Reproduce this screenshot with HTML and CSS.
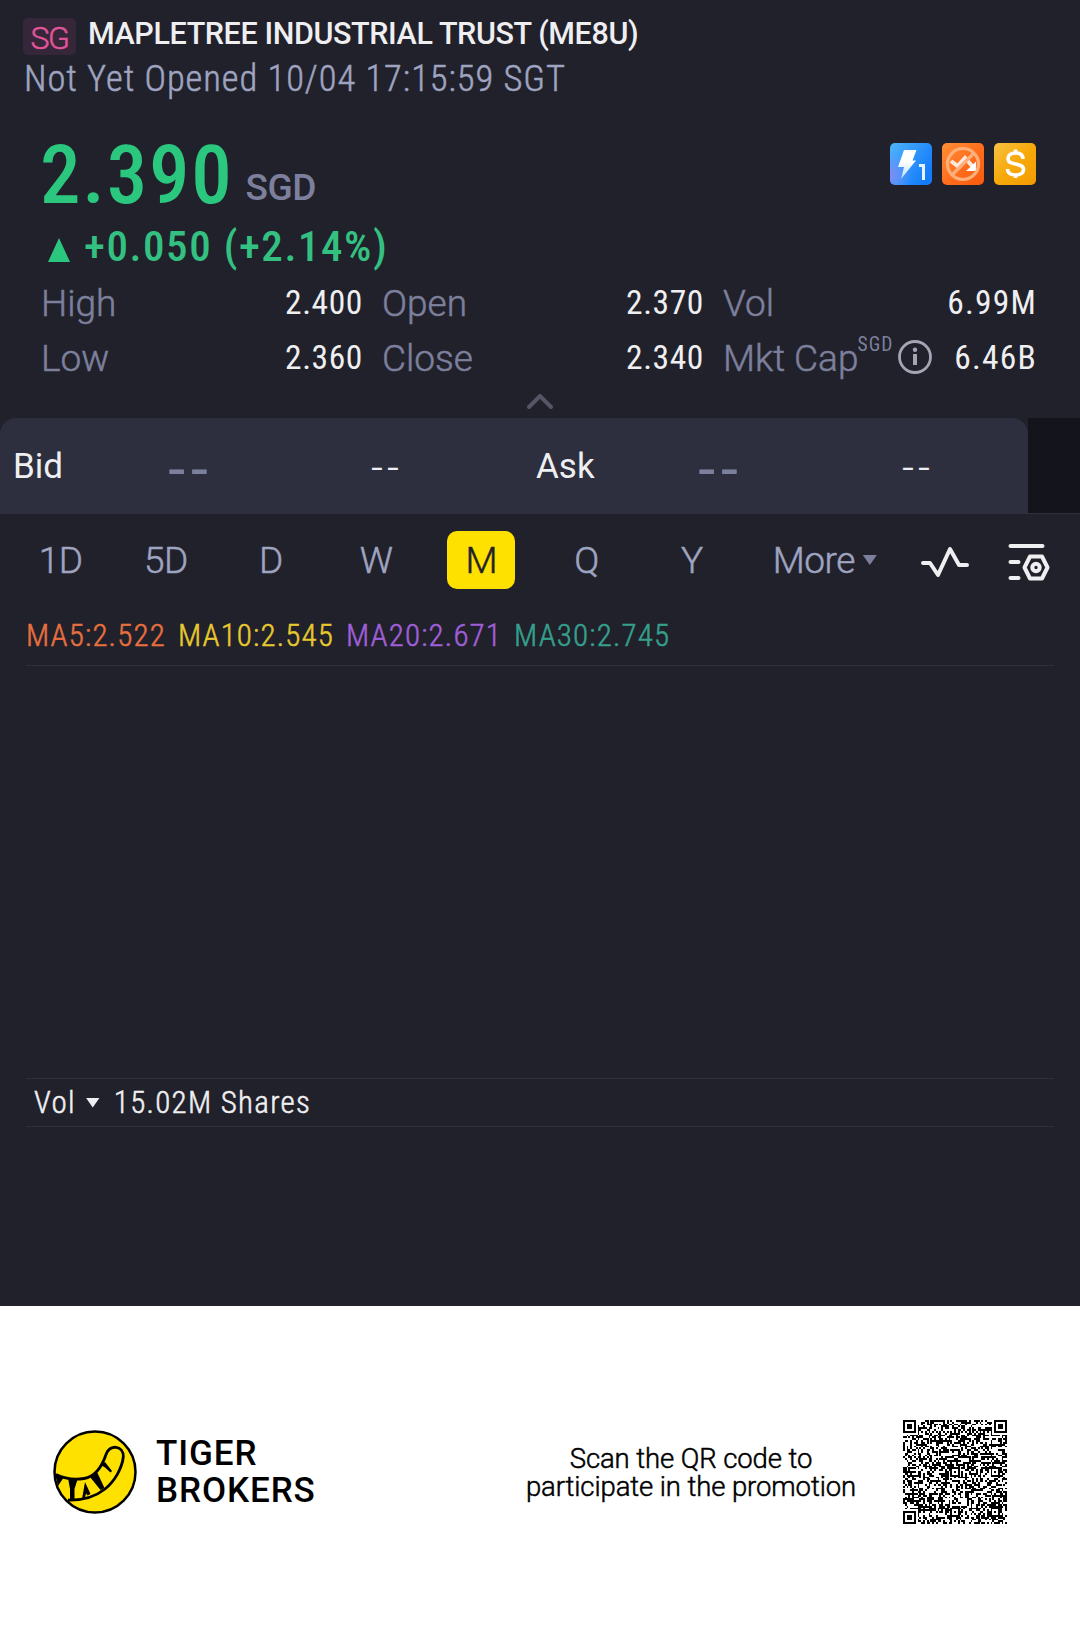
FILE: index.html
```html
<!doctype html>
<html lang="en">
<head>
  <title>MAPLETREE INDUSTRIAL TRUST (ME8U)</title>
  <meta charset="UTF-8">
  <meta name="viewport" content="width=device-width, initial-scale=1">
  <link rel="stylesheet" href="styles.css">
</head>
<body>
  <main>
    <header>
      <div class="title"><span class="market">SG</span><h1>MAPLETREE INDUSTRIAL TRUST (ME8U)</h1></div>
      <p class="status">Not Yet Opened 10/04 17:15:59 SGT</p>
    </header>

    <section class="quote">
      <div class="price">
        <span class="last">2.390</span>
        <span class="currency">SGD</span>
        <div class="tags">
          <svg viewBox="0 0 42 42">
            <defs>
              <linearGradient id="blue" x1="0" y1="0" x2="1" y2=".6">
                <stop offset="0" stop-color="#4fb4fb"/><stop offset="1" stop-color="#147cfa"/>
              </linearGradient>
              <radialGradient id="violet" cx="0" cy=".75" r=".5">
                <stop offset="0" stop-color="#7d8df5"/><stop offset="1" stop-color="#7d8df5" stop-opacity="0"/>
              </radialGradient>
              <linearGradient id="bolt" x1="0" y1="0" x2="0" y2="1">
                <stop offset=".4" stop-color="#fff"/><stop offset="1" stop-color="#b5dcff"/>
              </linearGradient>
            </defs>
            <rect width="42" height="42" rx="5" fill="url(#blue)"/>
            <rect width="42" height="42" rx="5" fill="url(#violet)"/>
            <path d="M14 7h12.500l-4 10.500h3.500L11 36l3-12H8z" fill="url(#bolt)"/>
            <path d="M29 22.500h4.500V37" fill="none" stroke="#e6f3ff" stroke-width="3"/>
          </svg>
          <svg viewBox="0 0 42 42">
            <defs>
              <linearGradient id="orange" x1="0" y1="0" x2="1" y2="1">
                <stop offset="0" stop-color="#ff9035"/><stop offset=".5" stop-color="#ff6f1e"/><stop offset="1" stop-color="#f8590c"/>
              </linearGradient>
            </defs>
            <rect width="42" height="42" rx="5" fill="url(#orange)"/>
            <path d="M9 18l6.500 5 7.500-8 8 9" fill="none" stroke="#ffe9dc" stroke-width="4"/>
            <path d="M34 18.500v9.500H24z" fill="#fff"/>
            <g fill="none" stroke="#ffb07a" stroke-width="3.200"><circle cx="21" cy="21" r="15.500"/><path d="M10 32l22-22"/></g>
          </svg>
          <svg viewBox="0 0 42 42">
            <defs>
              <linearGradient id="gold" x1="0" y1="0" x2="1" y2="1">
                <stop offset="0" stop-color="#f6c143"/><stop offset=".5" stop-color="#f7a90a"/><stop offset="1" stop-color="#f39b00"/>
              </linearGradient>
            </defs>
            <rect width="42" height="42" rx="5" fill="url(#gold)"/>
            <path d="M29 16c0-4-3-6-7.500-6S14 12 14 15.500s2.500 4.500 7.500 5.500 8 2 8 5.500-3.500 5.500-8 5.500-8-2-8-6M21.500 6.500v4M21.500 31.500v3.500" fill="none" stroke="#fff" stroke-width="3.600"/>
          </svg>
        </div>
      </div>
      <p class="change"><i class="up"></i>+0.050 (+2.14%)</p>
      <dl class="stats">
        <div><dt>High</dt><dd>2.400</dd></div>
        <div><dt>Open</dt><dd>2.370</dd></div>
        <div><dt>Vol</dt><dd class="wide">6.99M</dd></div>
        <div><dt>Low</dt><dd>2.360</dd></div>
        <div><dt>Close</dt><dd>2.340</dd></div>
        <div>
          <dt>Mkt Cap</dt><small>SGD</small>
          <svg class="info" viewBox="0 0 34 34"><circle cx="17" cy="17" r="15.500"/><circle class="dot" cx="17" cy="9.700" r="2.200"/><path d="M17 14v11"/></svg>
          <dd class="wide">6.46B</dd>
        </div>
      </dl>
      <svg class="collapse" viewBox="0 0 26 15"><path d="M2 13L13 2l11 11"/></svg>
    </section>

    <section class="book">
      <div class="sides">
        <div class="bid"><span>Bid</span><b>--</b><em>--</em></div>
        <div class="ask"><span>Ask</span><b>--</b><em>--</em></div>
      </div>
      <div class="rest"></div>
    </section>

    <nav>
      <a>1D</a><a>5D</a><a>D</a><a>W</a><a class="on">M</a><a>Q</a><a>Y</a>
      <span class="more">More</span><i class="down"></i>
      <svg class="pulse" viewBox="0 0 48 32"><path d="M2 17h7l8 12L29 3l9 16h8"/></svg>
      <svg class="settings" viewBox="0 0 42 40"><path d="M2.500 4h32M2.500 20h8M2.500 36h8"/><path d="M22 14.500h12l5.500 11-5.500 11H22l-5.500-11z"/><circle cx="28" cy="25.500" r="3.700"/></svg>
    </nav>

    <section class="chart">
      <div class="averages">
        <span class="ma5">MA5:2.522</span>
        <span class="ma10">MA10:2.545</span>
        <span class="ma20">MA20:2.671</span>
        <span class="ma30">MA30:2.745</span>
      </div>
      <div class="candles"></div>
      <div class="volume"><span>Vol</span><i class="down"></i><span>15.02M Shares</span></div>
    </section>
  </main>

  <footer>
    <svg class="logo" viewBox="0 0 84 84">
      <circle cx="42" cy="42" r="40.500" fill="#ffe100" stroke="#000" stroke-width="2.500"/>
      <path d="M3 44.500C12 49 21 50 31 48.500c12-2 18-12 22-24C56 14 71 15 70.300 27 69 38 62 51 52 59 42 67 30 70.500 15 70" fill="none" stroke="#000" stroke-width="2.800"/>
      <path d="M2 43.500l9 3.500-6 9zM15 48h10l-3.500 11v11h-4.500V59zM29 69l3-17 5.500 12-3 1.500-1.500-2-1 4zM37 47l7-5 7.500 16-4 2zM48 35l4-3 7 9-1.500 1.500-5.500-5z"/>
    </svg>
    <strong>TIGER<br>BROKERS</strong>
    <p>Scan the QR code to<br>participate in the promotion</p>
    <svg class="qr" viewBox="0 0 57 57"><path id="modules"/></svg>
  </footer>
  <script>
// QR modules: three finders, the small alignment squares, data in between
const size = 57;
let seed = 20241004, d = '';
const rand = () => (seed = (seed * 1103515245 + 12345) % 2147483648) / 2147483648;
const ring = (x, y, cx, cy, list) => list.includes(Math.max(Math.abs(x - cx), Math.abs(y - cy)));
const dark = (x, y) => {
  for (const [cx, cy] of [[3, 3], [size - 4, 3], [3, size - 4]])
    if (Math.abs(x - cx) < 5 && Math.abs(y - cy) < 5) return ring(x, y, cx, cy, [0, 1, 3]);
  for (const cx of [6, 28, 50])
    for (const cy of [6, 28, 50])
      if (cx + cy > 34 && Math.abs(x - cx) < 3 && Math.abs(y - cy) < 3) return ring(x, y, cx, cy, [0, 2]);
  if (x === 6 || y === 6) return (x + y) % 2 === 0;
  return rand() < .52;
};
for (let y = 0; y < size; y++)
  for (let x = 0; x < size; x++)
    if (dark(x, y)) d += `M${x} ${y}h1v1h-1z`;
document.querySelector('#modules').setAttribute('d', d);
  </script>
</body>
</html>
```
FILE: styles.css
```css
* { box-sizing: border-box }
body {
  margin: 0;
  width: 1080px;
  background: #fff;
  color: #efeff1;
  font-family: Roboto, "Liberation Sans", sans-serif
}
h1, p, dl, dd { margin: 0 }
main {
  height: 1306px;
  background: #21212b
}
svg { display: block }
.status, .last, .change, dd, .stats small, .averages, .volume {
  font-family: "Roboto Condensed", Roboto, sans-serif
}
.market, .status, dt, nav, .averages, .volume, footer p { -webkit-text-stroke: .5px }

header {
  height: 130px;
  padding: 10px 23px 0
}
.title {
  display: flex;
  height: 46px
}
.market {
  width: 53px;
  height: 37px;
  margin-top: 8px;
  border-radius: 5px;
  background: #35263a;
  color: #e0559a;
  font-size: 32px;
  font-weight: 300;
  letter-spacing: -1.500px;
  line-height: 41px;
  text-align: center
}
h1 {
  margin-left: 12px;
  font-size: 30.500px;
  font-weight: 500;
  letter-spacing: -.4px;
  line-height: 48px
}
.status {
  padding-left: 1px;
  color: #9fa4c0;
  font-size: 36.500px;
  font-weight: 300;
  letter-spacing: .960px;
  line-height: 46px
}

.quote { height: 288px }
.price {
  display: flex;
  height: 88px;
  padding: 0 44px 0 40px
}
.last {
  color: #2bc77e;
  font-size: 81px;
  font-weight: 500;
  letter-spacing: 1.800px;
  line-height: 91px
}
.currency {
  margin-left: 12px;
  color: #7d809c;
  font-size: 37px;
  font-weight: 500;
  letter-spacing: -.4px;
  line-height: 116px
}
.tags {
  display: flex;
  gap: 10px;
  margin: 13px 0 0 auto
}
.tags svg { width: 42px; height: 42px }
.change {
  display: flex;
  height: 57px;
  padding-left: 48px;
  color: #33c081;
  font-size: 43px;
  font-weight: 500;
  letter-spacing: 1.560px;
  line-height: 57px
}
.up {
  width: 22px;
  height: 24px;
  margin: 20px 14px 0 0;
  background: #2bc77e;
  clip-path: polygon(50% 0, 100% 100%, 0 100%)
}
.stats {
  display: grid;
  grid-template-columns: 322px 322px 1fr;
  grid-auto-rows: 55px;
  column-gap: 19px;
  padding: 0 43px 0 41px;
  line-height: 55px
}
.stats div { display: flex }
dt {
  color: #7d809c;
  font-size: 37px;
  font-weight: 300;
  line-height: 58px
}
dd {
  margin-left: auto;
  font-size: 33.500px;
  letter-spacing: .6px
}
.wide { letter-spacing: 1.200px }
.stats small {
  margin-left: -1px;
  color: #7d809c;
  font-size: 19.500px;
  font-weight: 400;
  letter-spacing: 1.100px;
  line-height: 29px
}
.info {
  width: 34px;
  height: 34px;
  margin: 10px 0 0 4px;
  fill: none;
  stroke: #a3a4b4;
  stroke-width: 2.800
}
.info path { stroke-width: 4 }
.info .dot { fill: #a3a4b4; stroke: none }
.collapse {
  width: 26px;
  height: 15px;
  margin: 9px auto 0;
  fill: none;
  stroke: #545565;
  stroke-width: 4;
  stroke-linecap: round
}

.book {
  display: flex;
  height: 96px
}
.sides {
  display: flex;
  width: 1028px;
  border-radius: 16px 16px 0 0;
  background: #2d2e3e
}
.rest {
  flex: 1;
  border-bottom: 1px solid #2d2e3e;
  background: #14141d
}
.bid, .ask {
  display: grid;
  font-size: 35px;
  line-height: 97px
}
.bid {
  width: 536px;
  padding-left: 13px;
  grid-template-columns: 76px 198px 196px
}
.ask { grid-template-columns: 83px 198px 198px }
.bid b, .ask b {
  padding-left: 6px;
  color: #7d809c;
  font-size: 61px;
  font-weight: 400;
  letter-spacing: 6px;
  line-height: 102px;
  text-align: center
}
.bid em, .ask em {
  padding-left: 4px;
  font-size: 42px;
  font-style: normal;
  font-weight: 300;
  letter-spacing: 4px;
  line-height: 99px;
  text-align: center
}

nav {
  display: flex;
  align-items: center;
  height: 92px;
  padding-left: 8px;
  color: #9fa4c0;
  font-size: 37px;
  font-weight: 300;
  line-height: 59.500px
}
nav a {
  width: 68px;
  height: 58px;
  margin: 0 18.600px;
  border-radius: 10px;
  letter-spacing: -.5px;
  text-align: center
}
nav .on {
  background: #ffe100;
  color: #21212b
}
.more {
  height: 58px;
  margin-left: 28.500px;
  letter-spacing: -.5px
}
.down {
  width: 14px;
  height: 10px;
  background: #7d809c;
  clip-path: polygon(0 0, 100% 0, 50% 100%)
}
nav .down { margin-left: 8px }
nav svg {
  fill: none;
  stroke: #efeff1;
  stroke-width: 4;
  stroke-linecap: round;
  stroke-linejoin: round
}
.pulse {
  width: 48px;
  height: 32px;
  margin: 4px 0 0 44px
}
.settings {
  width: 42px;
  height: 40px;
  margin: 4px 0 0 39px
}

.chart { padding: 0 26px }
.averages {
  display: flex;
  gap: 12px;
  height: 60px;
  border-bottom: 1px solid #2d2e3e;
  font-size: 31px;
  font-weight: 300;
  letter-spacing: 1.150px;
  line-height: 59px
}
.ma5 { color: #e8703f }
.ma10 { color: #e8c92f }
.ma20 { color: #a05fd9 }
.ma30 { color: #35a08c }
.candles { height: 412px }
.volume {
  display: flex;
  align-items: center;
  height: 49px;
  padding-left: 8px;
  border: solid #2d2e3e;
  border-width: 1px 0;
  font-size: 31px;
  font-weight: 300;
  letter-spacing: 1.300px
}
.volume .down {
  margin: 0 14px 0 10px;
  background: #efeff1
}

footer {
  display: flex;
  align-items: center;
  height: 332px;
  padding-left: 53px;
  color: #000
}
.logo { width: 84px; height: 84px }
footer strong {
  width: 180px;
  margin-left: 19px;
  font-size: 35px;
  font-weight: 500;
  letter-spacing: .900px;
  line-height: 37.500px
}
footer p {
  width: 336px;
  margin: 2px 0 0 187px;
  font-size: 27.500px;
  font-weight: 300;
  letter-spacing: -.1px;
  line-height: 28.500px;
  text-align: center;
  white-space: nowrap
}
.qr {
  width: 104px;
  height: 104px;
  margin-left: 44px;
  shape-rendering: crispEdges
}
```
